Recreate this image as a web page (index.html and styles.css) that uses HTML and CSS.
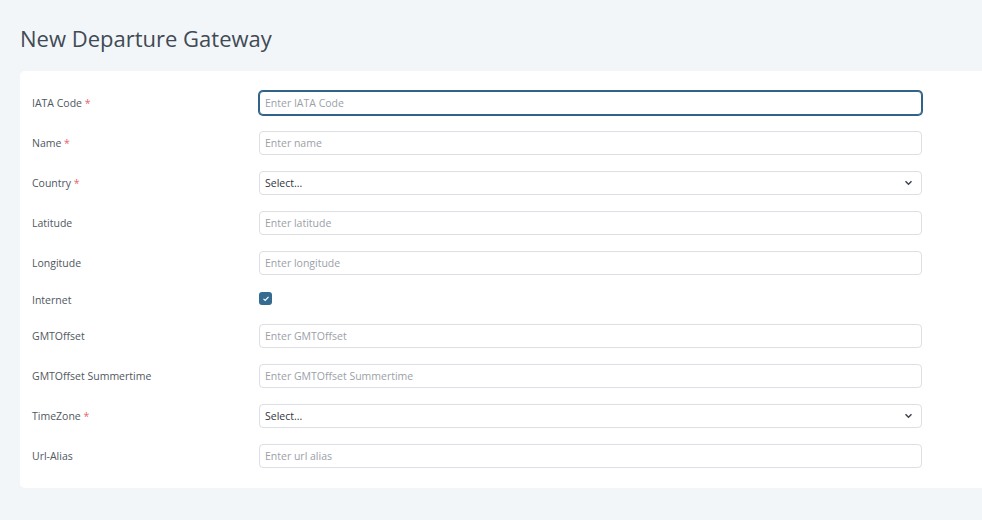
FILE: index.html
```html
<!DOCTYPE html>
<html lang="en">
<head>
  <meta charset="UTF-8">
  <title>New Departure Gateway</title>
  <link rel="stylesheet" href="styles.css">
</head>
<body>
  <h1>New Departure Gateway</h1>

  <form class="card">
    <div class="row">
      <label for="iata">IATA Code <span class="req">*</span></label>
      <input id="iata" type="text" placeholder="Enter IATA Code" autofocus>
    </div>
    <div class="row">
      <label for="name">Name <span class="req">*</span></label>
      <input id="name" type="text" placeholder="Enter name">
    </div>
    <div class="row">
      <label>Country <span class="req">*</span></label>
      <div class="select">
        <span>Select...</span>
        <svg width="9" height="6" viewBox="0 0 9 6"><path d="M1.5 1.3l3 2.9 3-2.9" fill="none" stroke="#3c4650" stroke-width="1.5"/></svg>
      </div>
    </div>
    <div class="row">
      <label for="lat">Latitude</label>
      <input id="lat" type="text" placeholder="Enter latitude">
    </div>
    <div class="row">
      <label for="lng">Longitude</label>
      <input id="lng" type="text" placeholder="Enter longitude">
    </div>
    <div class="row check-row">
      <label>Internet</label>
      <span class="checkbox">
        <svg width="8" height="7" viewBox="0 0 8 7"><path d="M1.5 3.9l1.7 1.5L6.5 1.8" fill="none" stroke="#fff" stroke-width="1.2"/></svg>
      </span>
    </div>
    <div class="row">
      <label for="gmt">GMTOffset</label>
      <input id="gmt" type="text" placeholder="Enter GMTOffset">
    </div>
    <div class="row">
      <label for="gmts">GMTOffset Summertime</label>
      <input id="gmts" type="text" placeholder="Enter GMTOffset Summertime">
    </div>
    <div class="row">
      <label>TimeZone <span class="req">*</span></label>
      <div class="select">
        <span>Select...</span>
        <svg width="9" height="6" viewBox="0 0 9 6"><path d="M1.5 1.3l3 2.9 3-2.9" fill="none" stroke="#3c4650" stroke-width="1.5"/></svg>
      </div>
    </div>
    <div class="row">
      <label for="alias">Url-Alias</label>
      <input id="alias" type="text" placeholder="Enter url alias">
    </div>
  </form>
</body>
</html>
```

FILE: styles.css
```css
body {
  margin: 0;
  padding: 0 0 0 20px;
  background-color: #f3f6f9;
  font-family: 'Open Sans', sans-serif;
  color: #4a525a;
  overflow: hidden;
}
h1 {
  margin: 0 0 19px;
  padding-top: 24px;
  line-height: 28px;
  font-size: 22px;
  font-weight: 400;
  color: #3f4a55;
}
.card {
  background: white;
  border-radius: 5px;
  margin-right: -20px;
  padding: 20px 12px 4px;
}
.row {
  display: grid;
  grid-template-columns: 227px 663px;
  align-items: center;
  margin-bottom: 16px;
}
.row label {
  font-size: 10.5px;
  font-weight: 500;
  color: #50575e;
}
.req {
  color: #e8636d;
}
.row input,
.select {
  box-sizing: border-box;
  height: 24px;
  width: 663px;
  border: 1px solid #dcdfe4;
  border-radius: 4px;
  padding: 0 5px;
  font-family: inherit;
  font-size: 10.5px;
  color: #333;
  outline: none;
  background: white;
}
.row input::placeholder {
  color: #9ba1a8;
}
.row input:focus {
  border-color: #316388;
  box-shadow: 0 0 0 1px #316388;
}
.select {
  display: flex;
  align-items: center;
  justify-content: space-between;
  padding-right: 8px;
  color: #2f363c;
}
.check-row {
  height: 17px;
  margin-bottom: 16px;
}
.checkbox {
  width: 13px;
  height: 13px;
  margin-top: -2px;
  border-radius: 3px;
  background: #356b90;
  display: flex;
  align-items: center;
  justify-content: center;
}
```
